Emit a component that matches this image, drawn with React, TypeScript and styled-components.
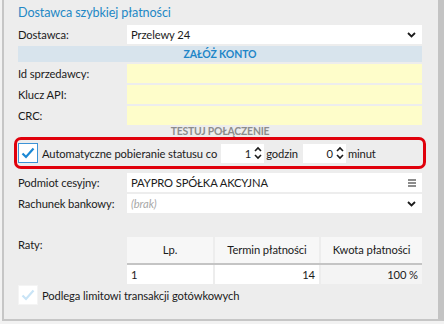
import React from "react";
import styled, { createGlobalStyle } from "styled-components";

const GlobalStyle = createGlobalStyle`
  body {
    margin: 0;
    background: #f2f2f2;
    font-family: Lato, "Noto Sans", sans-serif;
    font-size: 11.2px;
    letter-spacing: -0.1px;
    color: #1b1b1b;
  }
`;

export default function App() {
  return (
    <>
      <GlobalStyle />
      <Panel>
        <Title>Dostawca szybkiej płatności</Title>

        <Form>
          <Label>Dostawca:</Label>
          <Field>
            Przelewy 24
            <Chevron />
          </Field>

          <Band>ZAŁÓŻ KONTO</Band>

          <Label>Id sprzedawcy:</Label>
          <Field $required />
          <Label>Klucz API:</Label>
          <Field $required />
          <Label>CRC:</Label>
          <Field $required />
        </Form>

        <TestLink>TESTUJ POŁĄCZENIE</TestLink>

        <Highlight>
          <CheckBox $checked>
            <CheckMark color="#1b88d4" />
          </CheckBox>
          <CheckText>Automatyczne pobieranie statusu co</CheckText>
          <Spinner>
            1
            <SpinArrows />
          </Spinner>
          <Unit>godzin</Unit>
          <Spinner $second>
            0
            <SpinArrows />
          </Spinner>
          <Unit>minut</Unit>
        </Highlight>

        <Form $top={4}>
          <Label>Podmiot cesyjny:</Label>
          <Field>
            PAYPRO SPÓŁKA AKCYJNA
            <MenuIcon />
          </Field>
          <Label>Rachunek bankowy:</Label>
          <Field>
            <Placeholder>(brak)</Placeholder>
            <Chevron />
          </Field>
        </Form>

        <RatySection>
          <Label>Raty:</Label>
          <Table>
            <HeadCell>Lp.</HeadCell>
            <HeadCell>Termin płatności</HeadCell>
            <HeadCell>Kwota płatności</HeadCell>
            <HeadLine />
            <Cell>1</Cell>
            <Cell $align="right">14</Cell>
            <Cell $align="right" $muted>
              100 %
            </Cell>
          </Table>
        </RatySection>

        <CheckRow>
          <CheckBox>
            <CheckMark color="#c9e4f6" />
          </CheckBox>
          <CheckText>Podlega limitowi transakcji gotówkowych</CheckText>
        </CheckRow>
      </Panel>
    </>
  );
}

function Chevron() {
  return (
    <IconSlot>
      <svg width="9" height="6" viewBox="0 0 9 6">
        <path d="M1 1 L4.5 4.5 L8 1" fill="none" stroke="#1b1b1b" strokeWidth="1.8" />
      </svg>
    </IconSlot>
  );
}

function MenuIcon() {
  return (
    <IconSlot>
      <svg width="8" height="8" viewBox="0 0 8 8">
        <path d="M0 1 H8 M0 4 H8 M0 7 H8" stroke="#1b1b1b" strokeWidth="1.2" />
      </svg>
    </IconSlot>
  );
}

function SpinArrows() {
  return (
    <svg width="8" height="14" viewBox="0 0 8 14" style={{ marginLeft: 3 }}>
      <path d="M1 5 L4 2 L7 5" fill="none" stroke="#1b1b1b" strokeWidth="1.6" />
      <path d="M1 9 L4 12 L7 9" fill="none" stroke="#1b1b1b" strokeWidth="1.6" />
    </svg>
  );
}

function CheckMark({ color }: { color: string }) {
  return (
    <svg width="14" height="12" viewBox="0 0 14 12">
      <path d="M1.5 6.5 L5 10 L12.5 1.5" fill="none" stroke={color} strokeWidth="2.2" />
    </svg>
  );
}

const Panel = styled.div`
  box-sizing: border-box;
  margin-left: 2px;
  height: 321px;
  background: #ededed;
  border-left: 2px solid #c6c6c6;
  border-right: 6px solid #c3c3c3;
  border-bottom: 2px solid #c6c6c6;
  padding: 4px 16px 0 14px;
`;

const Title = styled.div`
  font-size: 12.6px;
  line-height: 17px;
  color: #2388c5;
  margin-bottom: 4px;
`;

const Form = styled.div<{ $top?: number }>`
  display: grid;
  grid-template-columns: 109px 1fr;
  row-gap: 2px;
  align-items: center;
  margin-top: ${(p) => p.$top ?? 0}px;
`;

const Label = styled.div`
  line-height: 19px;
  white-space: nowrap;
`;

const Field = styled.div<{ $required?: boolean }>`
  display: flex;
  align-items: center;
  height: 19px;
  padding: 0 6px 0 4px;
  background: ${(p) => (p.$required ? "#fefdca" : "#ffffff")};
  white-space: nowrap;
`;

const IconSlot = styled.span`
  display: flex;
  align-items: center;
  margin-left: auto;
`;

const Placeholder = styled.span`
  color: #a8a8a8;
  font-style: italic;
`;

const Band = styled.div`
  grid-column: 1 / -1;
  height: 16px;
  line-height: 16px;
  background: #d8e4ed;
  color: #1f86c8;
  font-weight: 700;
  font-size: 10.5px;
  text-align: center;
`;

const TestLink = styled.div`
  height: 12px;
  line-height: 13px;
  text-align: center;
  font-weight: 700;
  font-size: 10.4px;
  letter-spacing: -0.2px;
  color: #8c8c8c;
`;

const Highlight = styled.div`
  box-sizing: border-box;
  display: flex;
  align-items: center;
  height: 32px;
  margin: 0 -4px;
  padding: 0 1px;
  border: 3px solid #e0000b;
  border-radius: 7px;
`;

const CheckBox = styled.span<{ $checked?: boolean }>`
  box-sizing: border-box;
  display: flex;
  align-items: center;
  justify-content: center;
  flex: none;
  width: 20px;
  height: 20px;
  background: #ffffff;
  border: 1px solid ${(p) => (p.$checked ? "#3c93d6" : "#f4f4f4")};
`;

const CheckText = styled.span`
  margin-left: 4px;
  white-space: nowrap;
`;

const Spinner = styled.span<{ $second?: boolean }>`
  box-sizing: border-box;
  display: flex;
  align-items: center;
  justify-content: flex-end;
  width: 43px;
  height: 19px;
  margin-left: ${(p) => (p.$second ? 5 : 4)}px;
  padding-right: 2px;
  background: #ffffff;
`;

const Unit = styled.span`
  margin-left: 2px;
`;

const RatySection = styled.div`
  display: grid;
  grid-template-columns: 109px 1fr;
  align-items: start;
  margin-top: 24px;
  & > ${Label} {
    line-height: 14px;
    margin-top: 1px;
  }
`;

const Table = styled.div`
  display: grid;
  grid-template-columns: 86px 104px 1fr;
  column-gap: 2px;
`;

const HeadCell = styled.div`
  height: 26px;
  line-height: 26px;
  background: #f7f7f7;
  text-align: center;
`;

const HeadLine = styled.div`
  grid-column: 1 / -1;
  height: 2px;
  background: #c4c4c4;
`;

const Cell = styled.div<{ $align?: "left" | "right"; $muted?: boolean }>`
  height: 19px;
  line-height: 19px;
  padding: 0 4px;
  text-align: ${(p) => p.$align ?? "left"};
  background: ${(p) => (p.$muted ? "#f4f4f4" : "#ffffff")};
`;

const CheckRow = styled.div`
  display: flex;
  align-items: center;
  margin-top: 1px;
`;
